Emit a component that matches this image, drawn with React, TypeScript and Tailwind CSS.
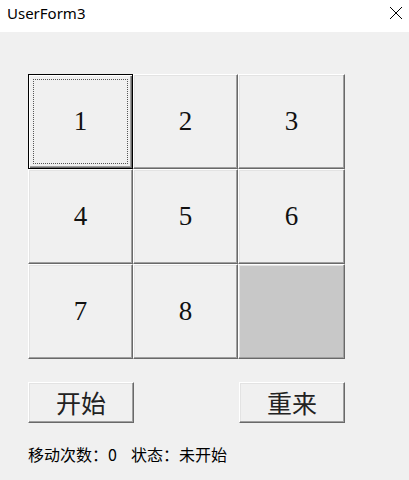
import { useState } from 'react';

const raised =
    'border border-t-white border-l-white border-r-[#696969] border-b-[#696969] shadow-[inset_-1px_-1px_0_#a0a0a0,inset_1px_1px_0_#e3e3e3]';

function Tile({ value, focused }: { value: number | null; focused?: boolean }) {
    if (value === null) {
        return <div className={`h-[95px] bg-[#c8c8c8] ${raised}`} />;
    }
    return (
        <div
            className={`relative h-[95px] flex items-center justify-center bg-[#f0f0f0] ${
                focused
                    ? 'border border-black shadow-[inset_1px_1px_0_#fff,inset_-1px_-1px_0_#696969,inset_-2px_-2px_0_#a0a0a0]'
                    : raised
            }`}
        >
            {focused && <div className="absolute inset-[4px] border border-dotted border-[#555]" />}
            <span className="text-[27px] leading-none text-[#111]" style={{ fontFamily: '"Liberation Serif", serif' }}>
                {value}
            </span>
        </div>
    );
}

export default function App() {
    const [tiles] = useState<(number | null)[]>([1, 2, 3, 4, 5, 6, 7, 8, null]);
    const cjk = '"Noto Sans CJK SC", sans-serif';

    return (
        <div className="w-[409px] h-[480px] bg-[#f0f0f0] overflow-hidden">
            <div className="h-[32px] bg-white flex items-start justify-between pl-[7px] pr-[6px] pt-[2px]">
                <span className="text-[15px] text-black" style={{ fontFamily: '"Noto Sans", sans-serif' }}>
                    UserForm3
                </span>
                <svg width="14" height="14" viewBox="0 0 14 14" className="mt-[4px]">
                    <path d="M1 1 L13 13 M13 1 L1 13" stroke="#000" strokeWidth="1" fill="none" />
                </svg>
            </div>

            <div className="pl-[28px] pt-[42px]">
                <div className="grid grid-cols-[105px_105px_107px] w-[317px]">
                    {tiles.map((v, i) => (
                        <Tile key={i} value={v} focused={i === 0} />
                    ))}
                </div>

                <div className="flex justify-between w-[317px] mt-[23px]">
                    <button
                        className={`w-[106px] h-[41px] bg-[#f0f0f0] text-[25px] text-[#222] flex items-center justify-center ${raised}`}
                        style={{ fontFamily: cjk }}
                    >
                        开始
                    </button>
                    <button
                        className={`w-[106px] h-[41px] bg-[#f0f0f0] text-[25px] text-[#222] flex items-center justify-center ${raised}`}
                        style={{ fontFamily: cjk }}
                    >
                        重来
                    </button>
                </div>

                <div className="mt-[23px] flex items-center text-[16px] text-black leading-none" style={{ fontFamily: cjk }}>
                    <span>移动次数：0</span>
                    <span className="ml-[14px]">状态：未开始</span>
                </div>
            </div>
        </div>
    );
}
